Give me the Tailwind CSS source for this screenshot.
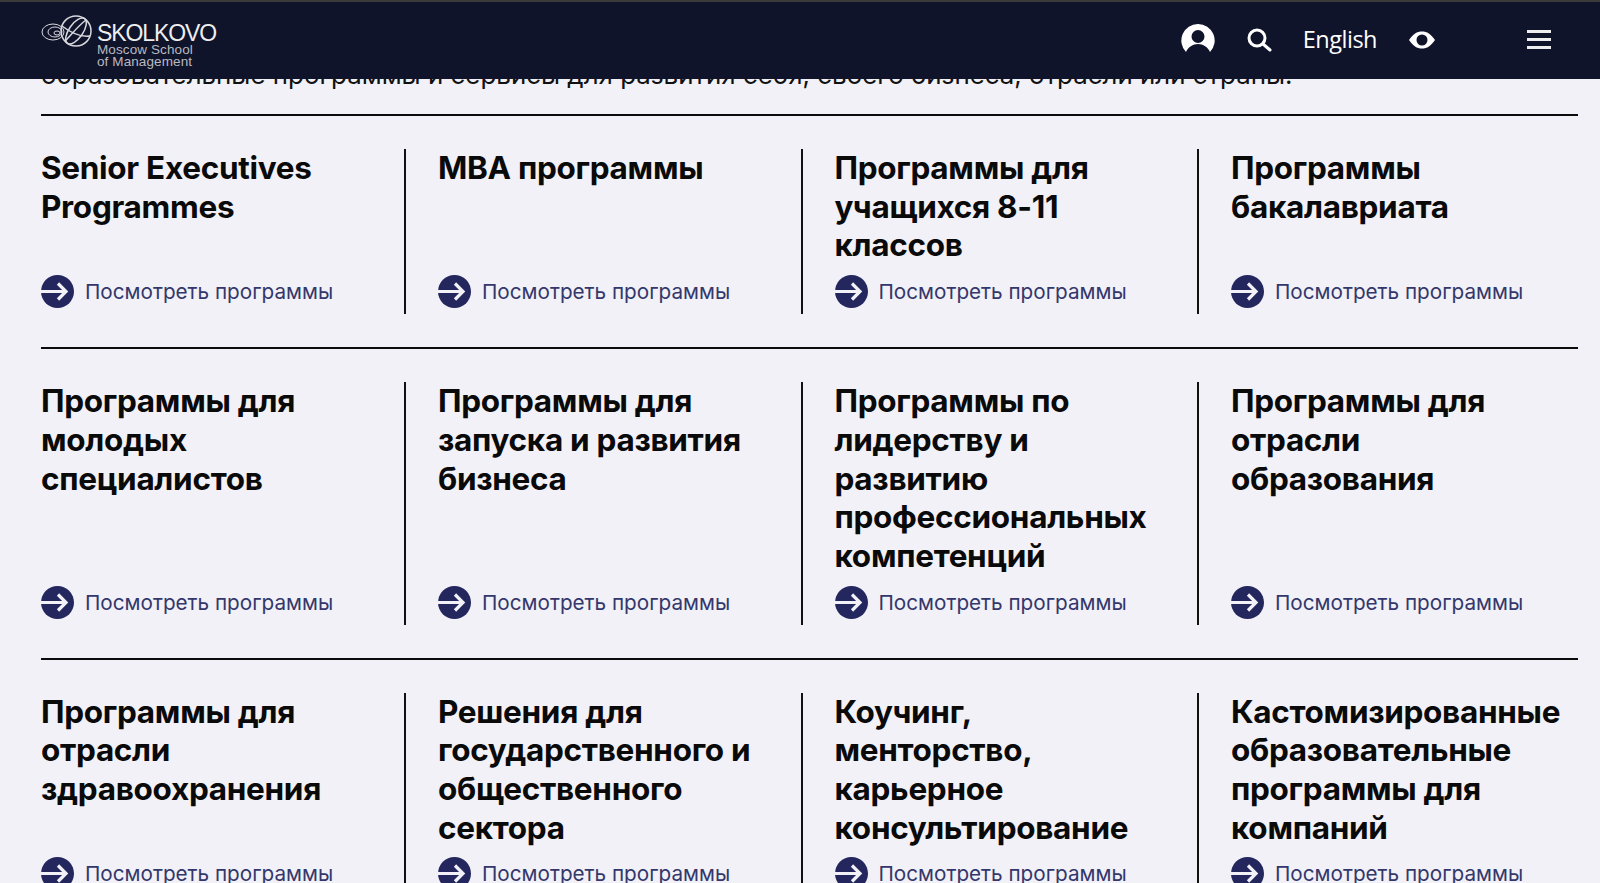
<!DOCTYPE html>
<html lang="ru">
<head>
    <meta charset="UTF-8">
    <title>SKOLKOVO</title>
    <script src="https://cdn.jsdelivr.net/npm/@tailwindcss/browser@4"></script>
</head>
<body class="bg-[#f1f1f7] h-screen overflow-hidden font-['Inter',sans-serif]">
    <header class="relative z-10 h-[79px] border-t-[2px] border-t-[#3a3a3a] bg-[#0f142b] pl-[41px] pr-[49px] flex items-center justify-between">
        <a class="flex items-start text-white">
            <svg class="w-[56px] h-[34px] -mt-[7px]" viewBox="0 0 56 34" fill="none" stroke="#d8d8dc" stroke-width="1">
                <ellipse cx="12" cy="17" rx="11" ry="8"/>
                <ellipse cx="14" cy="17" rx="7" ry="5"/>
                <ellipse cx="16" cy="18" rx="3" ry="2"/>
                <circle cx="35" cy="16" r="15" stroke-width="1.5"/>
                <ellipse cx="35" cy="16" rx="7" ry="15" transform="rotate(35 35 16)" stroke-width="1.5"/>
                <path d="M21 11 C30 18 40 22 49 21 M24 26 C30 20 38 10 45 5" stroke-width="1.5"/>
            </svg>
            <div class="font-['Liberation_Sans',sans-serif]">
                <div class="text-[23px] leading-[23px] tracking-[-1.1px] text-[#eeeeef]">SKOLKOVO</div>
                <div class="text-[13.500px] leading-[12px] tracking-[0.1px] text-[#b9b9c0] -mt-[1px] -mb-[8px]">Moscow School<br>of Management</div>
            </div>
        </a>
        <nav class="flex items-center text-white pb-[2px]">
            <svg class="w-[34px] h-[34px]" viewBox="0 0 34 34">
                <path fill="#fff" fill-rule="evenodd" d="M17 1a16.500 16.500 0 0 0-12 28c2-5 7-8 12-8s10 3 12 8A16.500 16.500 0 0 0 17 1Zm0 6a6.500 6.500 0 1 1 0 13a6.500 6.500 0 0 1 0-13Z"/>
            </svg>
            <svg class="w-[26px] h-[26px] ml-[31px]" viewBox="0 0 26 26" fill="none" stroke="#fff" stroke-width="3">
                <circle cx="11" cy="11" r="8"/>
                <path d="M17 17l7 6" stroke-linecap="round"/>
            </svg>
            <span class="ml-[31px] text-[23.500px] tracking-[-0.5px] font-['Open_Sans',sans-serif] leading-none">English</span>
            <svg class="w-[28px] h-[20px] ml-[31px]" viewBox="0 0 28 20">
                <path fill="#fff" fill-rule="evenodd" d="M1 10C5 4 9 1.500 14 1.500S23 4 27 10c-4 6-8 8.500-13 8.500S5 16 1 10Zm13-5.500a5.500 5.500 0 1 0 0 11a5.500 5.500 0 0 0 0-11Z"/>
            </svg>
            <div class="ml-[91px] w-[24px] flex flex-col gap-[5px]">
                <div class="h-[3px] bg-[#eeeeee]"></div>
                <div class="h-[3px] bg-[#eeeeee]"></div>
                <div class="h-[3px] bg-[#eeeeee]"></div>
            </div>
        </nav>
    </header>

    <main class="pl-[41px] pr-[22px] -mt-[19px]">
        <p class="text-[25.900px] leading-[30px] text-[#111] whitespace-nowrap">образовательные программы и сервисы для развития себя, своего бизнеса, отрасли или страны.</p>

        <section class="mt-[24px] border-t-[2px] border-t-[#0b0b0b] py-[33px] grid grid-cols-[363px_396.500px_396.500px_1fr]">
            <div class="flex flex-col justify-between"><h3 class="mb-[10px] text-[31.500px] leading-[38.700px] font-bold tracking-[-0.3px] text-[#0a0a0a]">Senior Executives<br>Programmes</h3><a class="mb-[6px] flex items-center gap-[11px] text-[20.700px] text-[#34376b]"><svg class="w-[33px] h-[33px] shrink-0" viewBox="0 0 33 33"><circle cx="16.500" cy="16.500" r="16.500" fill="#24265e"/><path d="M0 16.500H24M17 8.500l8 8-8 8" fill="none" stroke="#f1f1f7" stroke-width="3.200"/></svg>Посмотреть программы</a></div>
            <div class="border-l-[2px] border-l-[#111] pl-[32px] flex flex-col justify-between"><h3 class="mb-[10px] text-[31.500px] leading-[38.700px] font-bold tracking-[-0.3px] text-[#0a0a0a]">MBA программы</h3><a class="mb-[6px] flex items-center gap-[11px] text-[20.700px] text-[#34376b]"><svg class="w-[33px] h-[33px] shrink-0" viewBox="0 0 33 33"><circle cx="16.500" cy="16.500" r="16.500" fill="#24265e"/><path d="M0 16.500H24M17 8.500l8 8-8 8" fill="none" stroke="#f1f1f7" stroke-width="3.200"/></svg>Посмотреть программы</a></div>
            <div class="border-l-[2px] border-l-[#111] pl-[32px] flex flex-col justify-between"><h3 class="mb-[10px] text-[31.500px] leading-[38.700px] font-bold tracking-[-0.3px] text-[#0a0a0a]">Программы для<br>учащихся 8-11<br>классов</h3><a class="mb-[6px] flex items-center gap-[11px] text-[20.700px] text-[#34376b]"><svg class="w-[33px] h-[33px] shrink-0" viewBox="0 0 33 33"><circle cx="16.500" cy="16.500" r="16.500" fill="#24265e"/><path d="M0 16.500H24M17 8.500l8 8-8 8" fill="none" stroke="#f1f1f7" stroke-width="3.200"/></svg>Посмотреть программы</a></div>
            <div class="border-l-[2px] border-l-[#111] pl-[32px] flex flex-col justify-between"><h3 class="mb-[10px] text-[31.500px] leading-[38.700px] font-bold tracking-[-0.3px] text-[#0a0a0a]">Программы<br>бакалавриата</h3><a class="mb-[6px] flex items-center gap-[11px] text-[20.700px] text-[#34376b]"><svg class="w-[33px] h-[33px] shrink-0" viewBox="0 0 33 33"><circle cx="16.500" cy="16.500" r="16.500" fill="#24265e"/><path d="M0 16.500H24M17 8.500l8 8-8 8" fill="none" stroke="#f1f1f7" stroke-width="3.200"/></svg>Посмотреть программы</a></div>
        </section>

        <section class="border-t-[2px] border-t-[#0b0b0b] py-[33px] grid grid-cols-[363px_396.500px_396.500px_1fr]">
            <div class="flex flex-col justify-between"><h3 class="mb-[10px] text-[31.500px] leading-[38.700px] font-bold tracking-[-0.3px] text-[#0a0a0a]">Программы для<br>молодых<br>специалистов</h3><a class="mb-[6px] flex items-center gap-[11px] text-[20.700px] text-[#34376b]"><svg class="w-[33px] h-[33px] shrink-0" viewBox="0 0 33 33"><circle cx="16.500" cy="16.500" r="16.500" fill="#24265e"/><path d="M0 16.500H24M17 8.500l8 8-8 8" fill="none" stroke="#f1f1f7" stroke-width="3.200"/></svg>Посмотреть программы</a></div>
            <div class="border-l-[2px] border-l-[#111] pl-[32px] flex flex-col justify-between"><h3 class="mb-[10px] text-[31.500px] leading-[38.700px] font-bold tracking-[-0.3px] text-[#0a0a0a]">Программы для<br>запуска и развития<br>бизнеса</h3><a class="mb-[6px] flex items-center gap-[11px] text-[20.700px] text-[#34376b]"><svg class="w-[33px] h-[33px] shrink-0" viewBox="0 0 33 33"><circle cx="16.500" cy="16.500" r="16.500" fill="#24265e"/><path d="M0 16.500H24M17 8.500l8 8-8 8" fill="none" stroke="#f1f1f7" stroke-width="3.200"/></svg>Посмотреть программы</a></div>
            <div class="border-l-[2px] border-l-[#111] pl-[32px] flex flex-col justify-between"><h3 class="mb-[10px] text-[31.500px] leading-[38.700px] font-bold tracking-[-0.3px] text-[#0a0a0a]">Программы по<br>лидерству и<br>развитию<br>профессиональных<br>компетенций</h3><a class="mb-[6px] flex items-center gap-[11px] text-[20.700px] text-[#34376b]"><svg class="w-[33px] h-[33px] shrink-0" viewBox="0 0 33 33"><circle cx="16.500" cy="16.500" r="16.500" fill="#24265e"/><path d="M0 16.500H24M17 8.500l8 8-8 8" fill="none" stroke="#f1f1f7" stroke-width="3.200"/></svg>Посмотреть программы</a></div>
            <div class="border-l-[2px] border-l-[#111] pl-[32px] flex flex-col justify-between"><h3 class="mb-[10px] text-[31.500px] leading-[38.700px] font-bold tracking-[-0.3px] text-[#0a0a0a]">Программы для<br>отрасли<br>образования</h3><a class="mb-[6px] flex items-center gap-[11px] text-[20.700px] text-[#34376b]"><svg class="w-[33px] h-[33px] shrink-0" viewBox="0 0 33 33"><circle cx="16.500" cy="16.500" r="16.500" fill="#24265e"/><path d="M0 16.500H24M17 8.500l8 8-8 8" fill="none" stroke="#f1f1f7" stroke-width="3.200"/></svg>Посмотреть программы</a></div>
        </section>

        <section class="border-t-[2px] border-t-[#0b0b0b] pt-[33px] grid grid-cols-[363px_396.500px_396.500px_1fr]">
            <div class="flex flex-col justify-between"><h3 class="mb-[10px] text-[31.500px] leading-[38.700px] font-bold tracking-[-0.3px] text-[#0a0a0a]">Программы для<br>отрасли<br>здравоохранения</h3><a class="mb-[6px] flex items-center gap-[11px] text-[20.700px] text-[#34376b]"><svg class="w-[33px] h-[33px] shrink-0" viewBox="0 0 33 33"><circle cx="16.500" cy="16.500" r="16.500" fill="#24265e"/><path d="M0 16.500H24M17 8.500l8 8-8 8" fill="none" stroke="#f1f1f7" stroke-width="3.200"/></svg>Посмотреть программы</a></div>
            <div class="border-l-[2px] border-l-[#111] pl-[32px] flex flex-col justify-between"><h3 class="mb-[10px] text-[31.500px] leading-[38.700px] font-bold tracking-[-0.3px] text-[#0a0a0a]">Решения для<br>государственного и<br>общественного<br>сектора</h3><a class="mb-[6px] flex items-center gap-[11px] text-[20.700px] text-[#34376b]"><svg class="w-[33px] h-[33px] shrink-0" viewBox="0 0 33 33"><circle cx="16.500" cy="16.500" r="16.500" fill="#24265e"/><path d="M0 16.500H24M17 8.500l8 8-8 8" fill="none" stroke="#f1f1f7" stroke-width="3.200"/></svg>Посмотреть программы</a></div>
            <div class="border-l-[2px] border-l-[#111] pl-[32px] flex flex-col justify-between"><h3 class="mb-[10px] text-[31.500px] leading-[38.700px] font-bold tracking-[-0.3px] text-[#0a0a0a]">Коучинг,<br>менторство,<br>карьерное<br>консультирование</h3><a class="mb-[6px] flex items-center gap-[11px] text-[20.700px] text-[#34376b]"><svg class="w-[33px] h-[33px] shrink-0" viewBox="0 0 33 33"><circle cx="16.500" cy="16.500" r="16.500" fill="#24265e"/><path d="M0 16.500H24M17 8.500l8 8-8 8" fill="none" stroke="#f1f1f7" stroke-width="3.200"/></svg>Посмотреть программы</a></div>
            <div class="border-l-[2px] border-l-[#111] pl-[32px] flex flex-col justify-between"><h3 class="mb-[10px] text-[31.500px] leading-[38.700px] font-bold tracking-[-0.3px] text-[#0a0a0a]">Кастомизированные<br>образовательные<br>программы для<br>компаний</h3><a class="mb-[6px] flex items-center gap-[11px] text-[20.700px] text-[#34376b]"><svg class="w-[33px] h-[33px] shrink-0" viewBox="0 0 33 33"><circle cx="16.500" cy="16.500" r="16.500" fill="#24265e"/><path d="M0 16.500H24M17 8.500l8 8-8 8" fill="none" stroke="#f1f1f7" stroke-width="3.200"/></svg>Посмотреть программы</a></div>
        </section>
    </main>
</body>
</html>
